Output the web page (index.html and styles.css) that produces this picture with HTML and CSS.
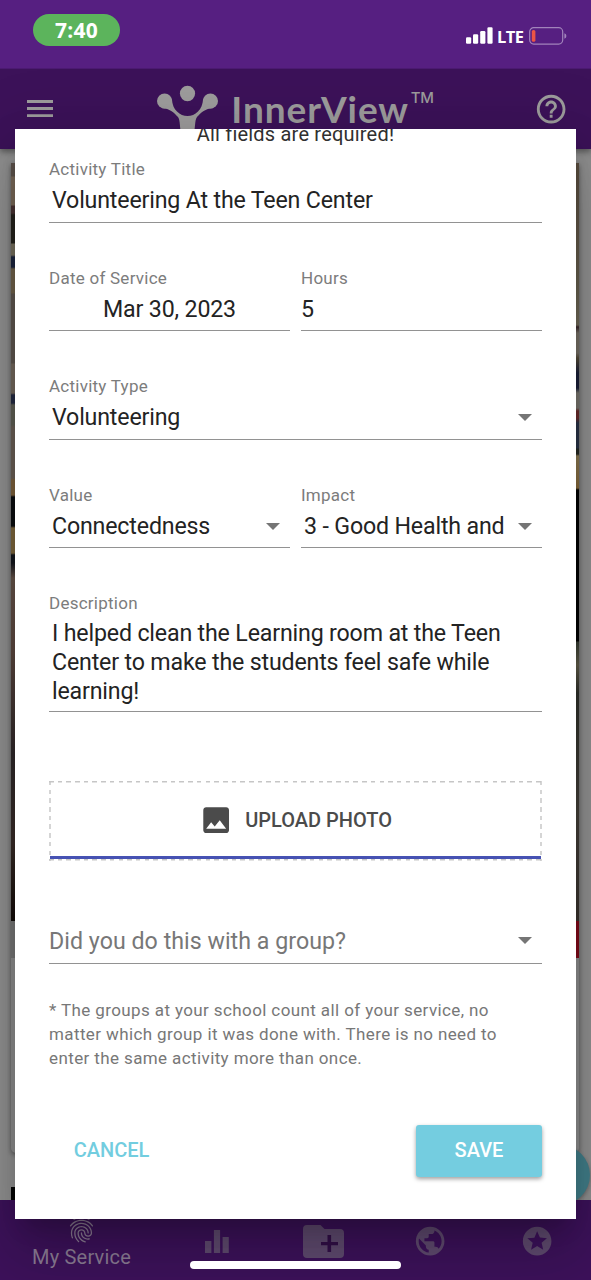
FILE: index.html
```html
<!DOCTYPE html>
<html lang="en">
<head>
<meta charset="utf-8">
<title>InnerView</title>
<link rel="stylesheet" href="styles.css">
</head>
<body>
<div class="screen">
  <div class="status">
    <div class="time">7:40</div>
    <div class="signal">
      <svg width="27" height="17" viewBox="0 0 27 17" fill="#fff"><rect x="0" y="10.3" width="5.2" height="6.5" rx="1.2"/><rect x="7" y="7.2" width="5.2" height="9.6" rx="1.2"/><rect x="14.2" y="4" width="5.2" height="12.8" rx="1.2"/><rect x="21.4" y="0.2" width="5.2" height="16.6" rx="1.2"/></svg>
      <span class="lte">LTE</span>
      <svg width="38" height="18" viewBox="0 0 38 18"><rect x=".7" y=".7" width="33" height="16.4" rx="4" fill="none" stroke="#a183bb" stroke-width="1.2"/><rect x="2.8" y="3" width="3.6" height="11.8" rx="1.6" fill="#ec5545"/><path d="M35.4 6.2q2 .8 2 2.8t-2 2.8z" fill="#a183bb"/></svg>
    </div>
  </div>
  <div class="appbar">
    <svg class="menu" width="26" height="18" viewBox="0 0 26 18" fill="#9d9c9c"><path d="M0 0h26v2.9H0zM0 7.1h26V10H0zM0 14.2h26v2.9H0z"/></svg>
    <div class="brand">
      <svg width="62" height="50" viewBox="0 0 62 50" fill="#9d9c9c"><ellipse cx="30.5" cy="8.500" rx="7.600" ry="7.800"/><circle cx="7.600" cy="16" r="7.600"/><circle cx="53.400" cy="16" r="7.600"/><path d="M14.800 14C15.500 20 17 23.500 20 26.500C26 32.500 35 32.500 41 26.500C44 23.500 45.500 20 46.200 14L56 23.200C49 23 44 27.500 40 32C37.500 35 38.500 44 36.500 50H24.500C22.500 44 23.500 35 21 32C17 27.500 12 23 5 23.200z"/></svg>
      <span class="brand-name">InnerView</span><span class="tm">TM</span>
    </div>
    <svg class="help" width="34.3" height="34.3" viewBox="0 0 24 24" fill="#9d9c9c"><path d="M11 18h2v-2h-2v2zm1-16C6.480 2 2 6.480 2 12s4.480 10 10 10 10-4.480 10-10S17.520 2 12 2zm0 18c-4.410 0-8-3.590-8-8s3.590-8 8-8 8 3.590 8 8-3.590 8-8 8zm0-14c-2.210 0-4 1.790-4 4h2c0-1.100.9-2 2-2s2 .9 2 2c0 2-3 1.750-3 5h2c0-2.250 3-2.500 3-5 0-2.210-1.790-4-4-4z"/></svg>
  </div>
  <div class="feed">
    <div class="card">
      <div class="photo"><div class="photo-left"></div><div class="photo-right"></div></div>
      <div class="card-strip"></div>
    </div>
    <div class="next-card"></div>
    <div class="fab"></div>
  </div>
  <div class="tabs">
    <div class="tab active">
      <svg width="31" height="31" viewBox="0 0 24 24" fill="#8b7c94"><path d="M17.810 4.470c-.08 0-.16-.02-.23-.06C15.660 3.420 14 3 12.010 3c-1.980 0-3.860.47-5.570 1.410-.24.13-.54.04-.68-.2-.13-.24-.04-.55.2-.68C7.820 2.520 9.860 2 12.010 2c2.130 0 3.990.47 6.030 1.520.25.13.34.43.21.67-.09.18-.26.28-.44.28zM3.500 9.720c-.1 0-.2-.03-.29-.09-.23-.16-.28-.47-.12-.7.990-1.400 2.250-2.500 3.750-3.270C9.980 4.040 14 4.030 17.150 5.650c1.500.77 2.760 1.860 3.750 3.250.16.22.11.54-.12.7-.23.16-.54.11-.7-.12-.9-1.260-2.040-2.250-3.390-2.940-2.870-1.470-6.540-1.470-9.400.01-1.360.7-2.500 1.700-3.400 2.960-.08.14-.23.21-.39.21zm6.250 12.070c-.13 0-.26-.05-.35-.15-.87-.87-1.340-1.430-2.010-2.640-.69-1.230-1.050-2.730-1.050-4.340 0-2.970 2.540-5.390 5.660-5.390s5.660 2.420 5.660 5.390c0 .28-.22.5-.5.5s-.5-.22-.5-.5c0-2.420-2.090-4.390-4.660-4.390-2.570 0-4.660 1.970-4.660 4.390 0 1.440.32 2.770.93 3.850.64 1.150 1.080 1.640 1.850 2.420.19.2.19.51 0 .71-.11.1-.24.15-.37.15zm7.170-1.850c-1.190 0-2.240-.3-3.100-.89-1.490-1.010-2.380-2.650-2.380-4.390 0-.28.22-.5.5-.5s.5.22.5.5c0 1.410.72 2.740 1.940 3.560.71.48 1.540.71 2.540.71.240 0 .64-.03 1.040-.1.27-.05.53.13.58.41.05.27-.13.53-.41.58-.57.11-1.070.12-1.210.12zM14.910 22c-.04 0-.09-.01-.13-.02-1.590-.44-2.630-1.030-3.720-2.100-1.400-1.390-2.170-3.240-2.170-5.220 0-1.620 1.380-2.940 3.080-2.940 1.700 0 3.080 1.320 3.080 2.940 0 1.070.93 1.940 2.080 1.940s2.080-.87 2.080-1.940c0-3.770-3.250-6.830-7.250-6.830-2.840 0-5.440 1.580-6.610 4.030-.39.81-.59 1.760-.59 2.800 0 .78.07 2.010.67 3.610.1.26-.03.55-.29.64-.26.1-.55-.04-.64-.29-.49-1.310-.73-2.610-.73-3.960 0-1.200.23-2.290.68-3.240 1.330-2.790 4.280-4.600 7.510-4.600 4.550 0 8.250 3.510 8.250 7.830 0 1.620-1.380 2.940-3.080 2.940s-3.080-1.320-3.080-2.940c0-1.070-.93-1.940-2.080-1.940s-2.080.87-2.080 1.940c0 1.710.66 3.310 1.870 4.510.95.94 1.860 1.460 3.270 1.850.27.07.42.35.35.61-.05.23-.26.38-.47.38z"/></svg>
      <span>My Service</span>
    </div>
    <div class="tab">
      <svg width="24" height="24" viewBox="0 0 24 24" fill="#604b70"><path d="M0 11h6.400v12H0zM8.900 0h6.200v23H8.900zM17.600 7h6.200v16h-6.200z"/></svg>
    </div>
    <div class="tab">
      <svg width="41" height="33" viewBox="0 0 41 33"><path d="M4 0h13.500l4 4H37q4 0 4 4v21q0 4-4 4H4q-4 0-4-4V4q0-4 4-4z" fill="#604b70"/><path d="M24.500 10h3.600v7H35v3.200h-6.900V27h-3.600v-6.800H18V17h6.500z" fill="#331049"/></svg>
    </div>
    <div class="tab">
      <svg width="34.300" height="34.300" viewBox="0 0 24 24" fill="#604b70"><path d="M12 2C6.480 2 2 6.480 2 12s4.480 10 10 10 10-4.480 10-10S17.520 2 12 2zm-1 17.930c-3.950-.49-7-3.850-7-7.930 0-.62.08-1.210.21-1.790L9 15v1c0 1.100.9 2 2 2v1.930zm6.900-2.540c-.26-.81-1-1.390-1.900-1.390h-1v-3c0-.55-.45-1-1-1H8v-2h2c.55 0 1-.45 1-1V7h2c1.100 0 2-.9 2-2v-.41c2.930 1.190 5 4.060 5 7.410 0 2.080-.8 3.970-2.100 5.390z"/></svg>
    </div>
    <div class="tab">
      <svg width="34.300" height="34.300" viewBox="0 0 24 24" fill="#604b70"><path d="M11.990 2C6.470 2 2 6.480 2 12s4.470 10 9.990 10C17.520 22 22 17.520 22 12S17.520 2 11.990 2zm4.240 16L12 15.450 7.770 18l1.120-4.810-3.730-3.230 4.920-.42L12 5l1.920 4.530 4.920.42-3.730 3.230L16.230 18z"/></svg>
    </div>
  </div>

  <div class="dialog-layer">
    <div class="dialog">
      <div class="notice">All fields are required!</div>
      <div class="field"><label>Activity Title</label><div class="value inset">Volunteering At the Teen Center</div></div>
      <div class="row">
        <div class="field"><label>Date of Service</label><div class="value centered">Mar 30, 2023</div></div>
        <div class="field"><label>Hours</label><div class="value">5</div></div>
      </div>
      <div class="field"><label>Activity Type</label><div class="value inset select">Volunteering</div></div>
      <div class="row">
        <div class="field"><label>Value</label><div class="value inset select">Connectedness</div></div>
        <div class="field"><label>Impact</label><div class="value inset select">3 - Good Health and</div></div>
      </div>
      <div class="field description"><label>Description</label><div class="value inset area">I helped clean the Learning room at the Teen<br>Center to make the students feel safe while<br>learning!</div></div>
      <div class="upload">
        <svg width="34.300" height="34.300" viewBox="0 0 24 24" fill="#4b4b4b"><path d="M21 19V5c0-1.100-.9-2-2-2H5c-1.100 0-2 .9-2 2v14c0 1.100.9 2 2 2h14c1.100 0 2-.9 2-2zM8.500 13.500l2.500 3.010L14.500 12l4.500 6H5l3.500-4.500z"/></svg>
        <span>UPLOAD PHOTO</span>
      </div>
      <div class="group select">Did you do this with a group?</div>
      <p class="note">* The groups at your school count all of your service, no<br>matter which group it was done with. There is no need to<br>enter the same activity more than once.</p>
      <div class="actions"><button class="cancel">CANCEL</button><button class="save">SAVE</button></div>
    </div>
  </div>
  <div class="home-bar"></div>
</div>
</body>
</html>
```
FILE: styles.css
```css
* { box-sizing: border-box; }
body { margin: 0; font-family: Roboto, sans-serif; }
svg { display: block; flex: none; }
.screen { position: relative; width: 591px; height: 1280px; overflow: hidden; display: flex; flex-direction: column; background: #929292; }

.status { position: relative; z-index: 3; height: 69px; flex: none; padding: 14px 24px 0 33px; display: flex; justify-content: space-between; background: #561f81; border-bottom: 1px solid #4b1a71; }
.time { width: 87px; height: 32px; border-radius: 16px; background: #5cb45c; color: #fff; font: 700 21px/33px "Open Sans", sans-serif; text-align: center; letter-spacing: .3px; }
.signal { display: flex; height: 18px; margin-top: 13px; color: #fff; }
.lte { width: 36px; padding-left: 4px; font: 700 16.500px/19px "Open Sans", sans-serif; letter-spacing: -.6px; }

.appbar { position: relative; z-index: 1; flex: none; height: 80px; display: flex; justify-content: space-between; padding: 0 23px 0 27px; background: #3c1259; box-shadow: 0 3px 6px rgba(0,0,0,.4); }
.menu { margin-top: 31px; }
.brand { display: flex; width: 276px; margin: 16px 2px 0 6px; color: #9d9c9c; }
.brand-name { width: 180px; margin: 2px 0 0 12px; font: 700 37px/44px Lato, sans-serif; letter-spacing: .9px; }
.tm { margin: 3px 0 0 1px; font: 500 15px/20px Inter, sans-serif; letter-spacing: -.5px; }
.help { margin-top: 23px; }

.feed { position: relative; flex: 1; padding: 14px 12px 0 11px; }
.card { height: 990px; border-radius: 0 0 5px 5px; background: #8f8f8f; box-shadow: 0 2px 5px rgba(0,0,0,.4); }
.photo { display: flex; justify-content: space-between; height: 758px; }
.photo-left, .photo-right { width: 5px; }
.photo-left { background: linear-gradient(#5d534c 0 13px, #7a6a59 14px 42px, #4a3434 43px 50px, #25231d 52px 80px, #77705f 81px 92px, #1c2540 94px 104px, #70624b 106px 130px, #5f5750 131px 200px, #74695e 201px 230px, #242b43 232px 240px, #606055 242px 262px, #6b6057 264px 315px, #7e623d 317px 332px, #0b0d11 334px 363px, #7e683e 365px 390px, #14171e 392px 400px, #66544a 415px, #5c4840 490px, #30292b 590px, #392d28 680px, #120b08 758px); }
.photo-right { background: linear-gradient(#5b4e40, #696251 130px, #716b5a 162px, #39282b 164px, #777067 170px 190px, #554c39 195px, #1b2039 210px 225px, #79766e 230px 245px, #6b2d2c 248px 255px, #2b3447 260px 285px, #272a25 286px 291px, #8c7b54 293px, #886a3c 325px, #040404 327px 478px, #373d33 479px, #625e4b 502px, #30312c 530px, #45413a 650px, #3a332f 758px); }
.card-strip { height: 37px; background: linear-gradient(90deg, #777 50%, #820a19 50%); }
.next-card { width: 30px; height: 13px; margin-top: 34px; background: #050505; }
.fab { position: absolute; right: 1px; top: 996px; width: 60px; height: 60px; border-radius: 50%; background: #427f8b; box-shadow: 0 2px 4px rgba(0,0,0,.3); }

.tabs { position: relative; flex: none; height: 80px; display: grid; grid-template-columns: 163px 107px 106px 108px 107px; background: #3d125b; }
.tab { display: flex; justify-content: center; align-items: center; padding-top: 3px; }
.active { flex-direction: column; justify-content: flex-start; padding-top: 14px; color: #8b7c94; font-size: 20px; line-height: 25px; letter-spacing: .2px; }

.dialog-layer { position: absolute; z-index: 2; inset: 129px 15px 61px; }
.dialog { height: 1090px; overflow: hidden; padding: 0 34px; background: #fff; color: #232323; box-shadow: 0 16px 22px -10px rgba(0,0,0,.2), 0 34px 54px 4px rgba(0,0,0,.14), 0 13px 66px 11px rgba(0,0,0,.12); }
.notice { height: 39px; margin: -10px 0 0; font-size: 20px; line-height: 30px; text-align: center; letter-spacing: .2px; color: #303030; }
.field { height: 64.600px; margin-bottom: 44px; border-bottom: 1.400px solid #929292; }
.field label { display: block; height: 22px; padding-top: 1px; font-size: 17px; line-height: 20px; letter-spacing: .25px; color: #7c7c7c; }
.value { display: flex; align-items: center; justify-content: space-between; height: 41px; font-size: 23.200px; line-height: 28.800px; letter-spacing: -.17px; white-space: nowrap; }
.inset { padding-left: 3px; }
.centered { justify-content: center; }
.row { display: grid; grid-template-columns: 1fr 1fr; gap: 11px; }
.select::after { content: ""; margin-right: 10px; border: 7.500px solid transparent; border-top-color: #757575; border-bottom: 0; }
.field.description { height: 119.600px; margin-bottom: 69px; }
.area { display: block; height: auto; padding-top: 5px; }
.upload {
  display: flex; justify-content: center; align-items: center; gap: 12px; height: 80px; padding-bottom: 2px;
  color: #4b4b4b; font-size: 20px; font-weight: 500;
  background:
    linear-gradient(#4652b3, #4652b3) 1px 75px / 491px 3px no-repeat,
    repeating-linear-gradient(90deg, #c6c6c6 0 4.500px, transparent 4.500px 8.700px) top / 100% 1.500px no-repeat,
    repeating-linear-gradient(90deg, #c6c6c6 0 4.500px, transparent 4.500px 8.700px) 0 78px / 100% 1.500px no-repeat,
    repeating-linear-gradient(#d5d5d5 0 4.500px, transparent 4.500px 8.700px) left / 2px 100% no-repeat,
    repeating-linear-gradient(#d5d5d5 0 4.500px, transparent 4.500px 8.700px) right / 2px 100% no-repeat;
}
.group { display: flex; align-items: center; justify-content: space-between; height: 45px; margin-top: 58px; border-bottom: 1.400px solid #929292; font-size: 23.200px; letter-spacing: .03px; color: #777; }
.note { margin: 34px 0 0; font-size: 17px; line-height: 24.200px; letter-spacing: .39px; white-space: nowrap; color: #777; }
.actions { display: flex; justify-content: space-between; margin-top: 54px; }
.actions button { height: 52px; padding: 0; border: 0; font: 500 20px/51px Roboto, sans-serif; }
.cancel { width: 125px; background: none; color: #72cddf; }
.save { width: 126px; border-radius: 3px; background: #74cde0; color: #fff; box-shadow: 0 2px 4px rgba(0,0,0,.38); }
.home-bar { position: absolute; z-index: 4; left: 190px; bottom: 11px; width: 211px; height: 8px; border-radius: 4px; background: #fff; }
```
